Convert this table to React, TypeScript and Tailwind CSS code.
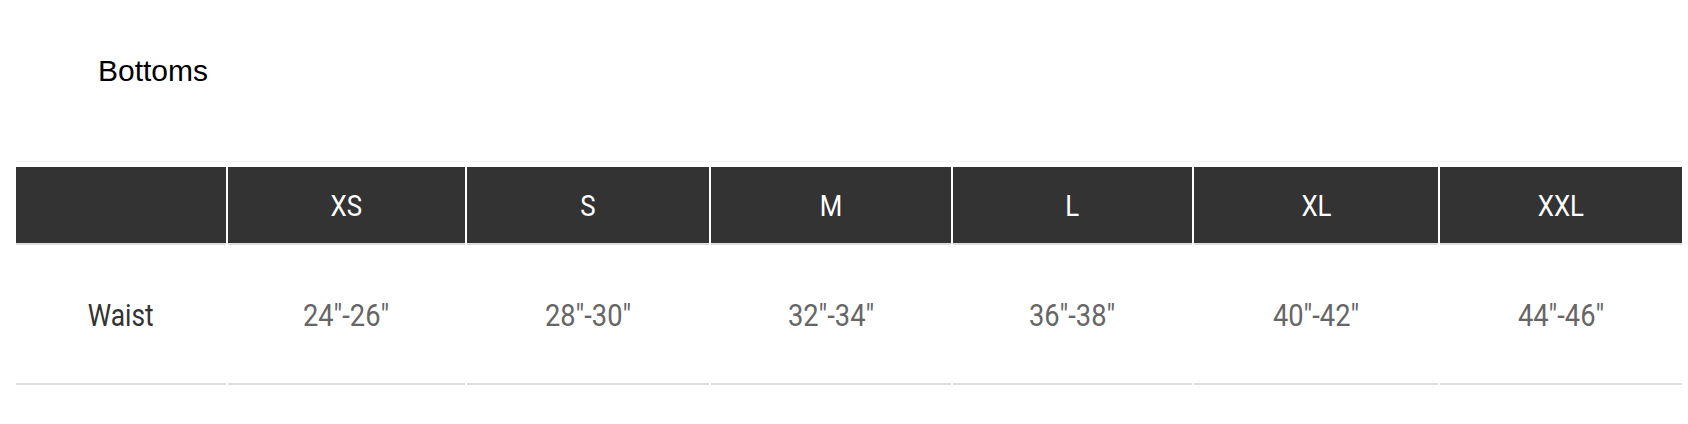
const sizes = ['XS', 'S', 'M', 'L', 'XL', 'XXL'];
const waist = ['24"-26"', '28"-30"', '32"-34"', '36"-38"', '40"-42"', '44"-46"'];
const widths = ['w-[237px]', 'w-[242px]', 'w-[240px]', 'w-[239px]', 'w-[244px]', 'w-[242px]'];

export default function App() {
  return (
    <div className="w-[1688px] h-[424px] bg-white font-['Liberation_Sans',Arial,sans-serif]">
      {/* Title */}
      <div className="pt-[56px] pl-[98px]">
        <h2 className="text-[30px] leading-none font-normal text-black">Bottoms</h2>
      </div>

      {/* Size table */}
      <div className="mt-[75px] pl-[16px] font-['Roboto',sans-serif]">
        <div className="flex gap-[2px] w-fit border-t border-[#f3f3f3] pt-[5px]">
          <div className="w-[210px] shrink-0 h-[76px] bg-[#333333] border-b-2 border-[#dddddd] box-content" />
          {sizes.map((s, i) => (
            <div
              key={s}
              className={`${widths[i]} shrink-0 h-[76px] box-content bg-[#333333] border-b-2 border-[#dddddd] flex items-center justify-center text-white text-[30px]`}
            >
              <span className="inline-block scale-x-[0.86]">{s}</span>
            </div>
          ))}
        </div>

        <div className="flex gap-[2px]">
          <div className="w-[210px] shrink-0 h-[134px] box-content border-b-2 border-[#dddddd] flex items-center justify-center pt-[4px] text-[31px] text-[#333333]">
            <span className="inline-block scale-x-[0.85]">Waist</span>
          </div>
          {waist.map((w, i) => (
            <div
              key={w}
              className={`${widths[i]} shrink-0 h-[134px] box-content border-b-2 border-[#dddddd] flex items-center justify-center pt-[4px] text-[31px] text-[#666666]`}
            >
              <span className="inline-block scale-x-[0.88]">{w}</span>
            </div>
          ))}
        </div>
      </div>
    </div>
  );
}
